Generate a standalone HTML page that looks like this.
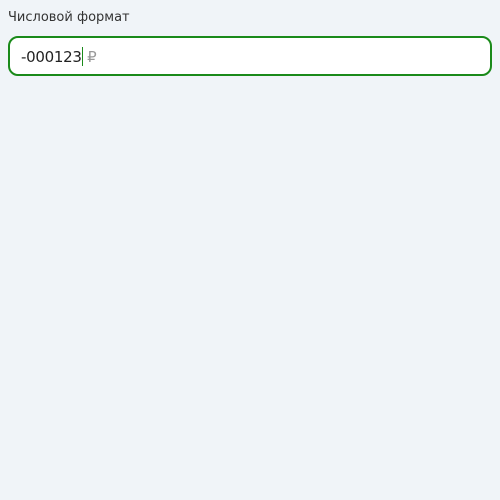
<!DOCTYPE html><html><head><style>
body{margin:0;background:#f0f4f8;font-family:"DejaVu Sans","Liberation Sans",sans-serif;}
.l{position:absolute;left:8px;top:10px;font-size:13px;color:#333;}
.b{position:absolute;left:8px;top:36px;width:480px;height:36px;border:2px solid #1a8a1a;border-radius:10px;background:#fff;}
.t{position:absolute;left:11px;top:9px;font-size:15px;color:#222;letter-spacing:-0.3px;}
.c{display:inline-block;width:1.5px;height:19px;background:#1a8a1a;vertical-align:-4px;margin:0 4px 0 0;}
.r{color:#999;}
</style></head><body>
<div class="l">Числовой формат</div>
<div class="b"><div class="t">-000123<span class="c"></span><span class="r">₽</span></div></div>
</body></html>
